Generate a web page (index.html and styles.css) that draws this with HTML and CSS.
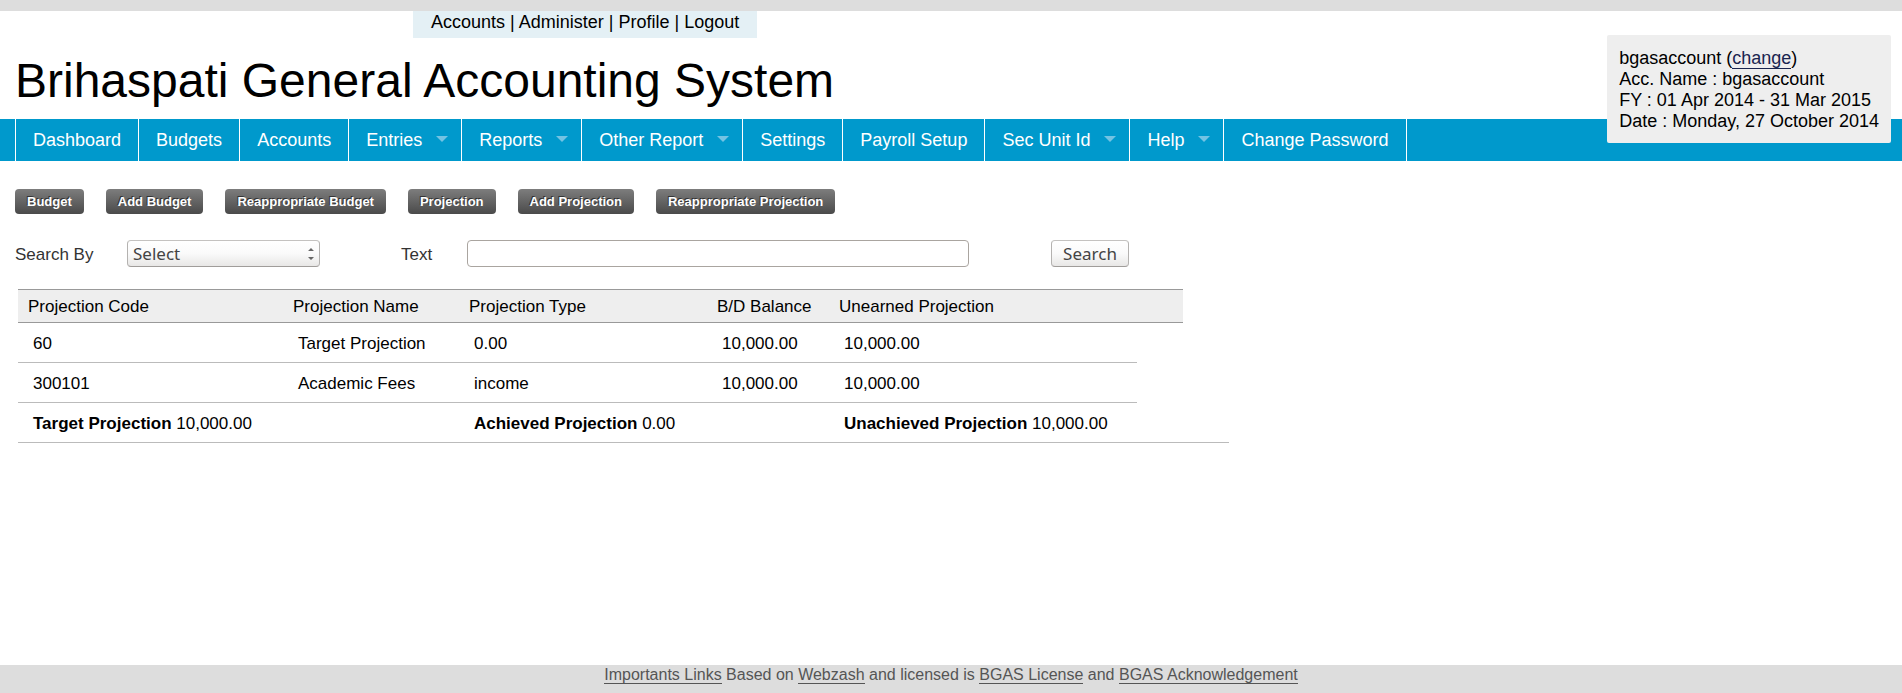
FILE: index.html
```html
<!DOCTYPE html>
<html lang="en">
<head>
<meta charset="utf-8">
<title>Brihaspati General Accounting System</title>
<link rel="stylesheet" href="styles.css">
</head>
<body>
<header class="header">
  <div class="toplinks"><a href="#">Accounts</a> | <a href="#">Administer</a> | <a href="#">Profile</a> | <a href="#">Logout</a></div>
  <h1 class="title">Brihaspati General Accounting System</h1>
  <div class="info">
    <div>bgasaccount (<a class="info-link" href="#">change</a>)</div>
    <div>Acc. Name : bgasaccount</div>
    <div>FY : 01 Apr 2014 - 31 Mar 2015</div>
    <div>Date : Monday, 27 October 2014</div>
  </div>
</header>
<nav class="menu">
  <a class="item" href="#">Dashboard</a>
  <a class="item" href="#">Budgets</a>
  <a class="item" href="#">Accounts</a>
  <a class="item sub" href="#">Entries</a>
  <a class="item sub" href="#">Reports</a>
  <a class="item sub" href="#">Other Report</a>
  <a class="item" href="#">Settings</a>
  <a class="item" href="#">Payroll Setup</a>
  <a class="item sub" href="#">Sec Unit Id</a>
  <a class="item sub" href="#">Help</a>
  <a class="item" href="#">Change Password</a>
</nav>
<main class="content">
  <div class="actions">
    <a class="action" href="#">Budget</a>
    <a class="action" href="#">Add Budget</a>
    <a class="action" href="#">Reappropriate Budget</a>
    <a class="action" href="#">Projection</a>
    <a class="action" href="#">Add Projection</a>
    <a class="action" href="#">Reappropriate Projection</a>
  </div>
  <form class="search">
    <label class="label-by" for="by">Search By</label>
    <div class="select-wrap">
      <select class="select" id="by"><option>Select</option></select>
      <svg class="spin" viewBox="0 0 6 12" aria-hidden="true"><path d="M0 3L3 0L6 3zM0 9L3 12L6 9z" fill="#666"/></svg>
    </div>
    <label class="label-text" for="text">Text</label>
    <input class="text" id="text" type="text">
    <button class="go" type="button">Search</button>
  </form>
  <table class="table">
    <colgroup><col class="c1"><col class="c2"><col class="c3"><col class="c4"><col class="c5"><col class="c6"><col class="c6"></colgroup>
    <thead>
      <tr><th>Projection Code</th><th>Projection Name</th><th>Projection Type</th><th>B/D Balance</th><th colspan="2">Unearned Projection</th></tr>
    </thead>
    <tbody>
      <tr><td>60</td><td>Target Projection</td><td>0.00</td><td>10,000.00</td><td>10,000.00</td></tr>
      <tr><td>300101</td><td>Academic Fees</td><td>income</td><td>10,000.00</td><td>10,000.00</td></tr>
      <tr><td colspan="2"><b>Target Projection</b> 10,000.00</td><td colspan="2"><b>Achieved Projection</b> 0.00</td><td colspan="3"><b>Unachieved Projection</b> 10,000.00</td></tr>
    </tbody>
  </table>
</main>
<footer class="footer"><a href="#">Importants Links</a> Based on <a href="#">Webzash</a> and licensed is <a href="#">BGAS License</a> and <a href="#">BGAS Acknowledgement</a></footer>
</body>
</html>
```
FILE: styles.css
```css
* { box-sizing: border-box; }

body {
  margin: 0;
  min-height: 100vh;
  display: flex;
  flex-direction: column;
  background: #fff;
  color: #000;
  font: 17px/20px "Liberation Sans", Arial, sans-serif;
}

.header {
  position: relative;
  border-top: 11px solid #ddd;
  padding: 0 15px 10px;
}

.toplinks {
  width: max-content;
  margin-left: 398px;
  padding: 1px 18px 5px;
  background: #e4f0f5;
  font-size: 18px;
  line-height: 21px;
}

.toplinks a { color: #000; text-decoration: none; }

.title {
  margin: 15px 0 0;
  font-size: 48px;
  font-weight: 400;
  line-height: 56px;
}

.info {
  position: absolute;
  top: 24px;
  right: 11px;
  padding: 13px 12px 11px;
  border-radius: 2px;
  background: #eee;
  font-size: 18px;
  line-height: 21px;
}

.info-link {
  color: #1a2550;
  text-decoration: none;
  border-bottom: 1px solid #1a2550;
}

.menu {
  display: flex;
  padding-left: 15px;
  background: #09c;
}

.item {
  padding: 0 17px;
  border-right: 1px solid #fff;
  color: #fff;
  font-size: 18px;
  line-height: 42px;
  text-decoration: none;
}

.item:first-child { border-left: 1px solid #fff; }

.sub {
  display: flex;
  align-items: center;
  gap: 14px;
  padding-right: 13px;
}

.sub::after {
  content: "";
  margin-bottom: 2px;
  border: 6px solid transparent;
  border-top-color: #73c3e3;
  border-bottom: 0;
}

.content { flex: 1; padding: 28px 15px; }

.actions { display: flex; gap: 22px; }

.action {
  padding: 0 12px;
  border-radius: 4px;
  background: linear-gradient(#7d7d7d, #4a4a4a);
  color: #fff;
  font-size: 13px;
  font-weight: 700;
  line-height: 25px;
  text-decoration: none;
  text-shadow: -1px -1px 0 #333;
}

.search {
  display: flex;
  align-items: center;
  margin-top: 26px;
  color: #333;
}

.search label { padding-top: 2px; }
.label-by { width: 112px; }
.label-text { width: 66px; margin-left: 81px; }

.select-wrap { position: relative; width: 193px; }

.select, .text, .go {
  height: 27px;
  border: 1px solid #aaa5a0;
  border-radius: 4px;
  font: 17px/24px "Noto Sans", sans-serif;
  color: #444;
}

.select, .go {
  background: linear-gradient(#fff, #fafafa 50%, #e8e7e6);
  border-color: #c4c2c0 #b4b2b0 #a09d9a;
}

.select {
  appearance: none;
  display: block;
  width: 100%;
  padding: 0 5px;
}

.spin {
  position: absolute;
  top: 8px;
  right: 6px;
  width: 6px;
  height: 12px;
}

.text { width: 502px; background: #fff; }
.go { margin-left: 82px; width: 78px; padding: 0; }

.table {
  table-layout: fixed;
  width: 1211px;
  margin: 22px 0 0 3px;
  border-collapse: collapse;
}

.c1 { width: 265px; }
.c2 { width: 176px; }
.c3 { width: 248px; }
.c4 { width: 122px; }
.c5 { width: 308px; }
.c6 { width: 46px; }

.table th {
  padding: 7px 10px 5px;
  border: solid #999;
  border-width: 1px 0;
  background: #eee;
  font-weight: 400;
  text-align: left;
}

.table td {
  padding: 11px 15px 8px;
  border-bottom: 1px solid #bbb;
}

.footer {
  padding-bottom: 8px;
  background: #ddd;
  color: #555;
  font-size: 16px;
  text-align: center;
}

.footer a {
  color: #555;
  text-decoration: none;
  border-bottom: 1px solid #555;
}
```
